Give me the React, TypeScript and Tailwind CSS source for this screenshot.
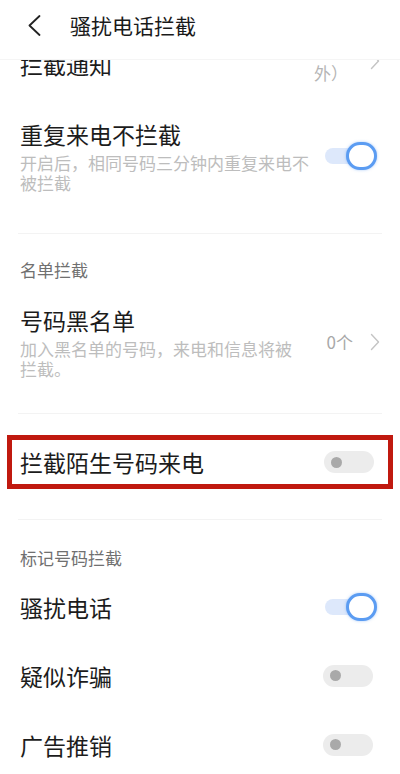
import React from 'react';

const font = { fontFamily: '"Noto Sans CJK SC", "Noto Sans", sans-serif' };

function Chevron({ className = '' }: { className?: string }) {
  return (
    <svg className={className} width="10" height="18" viewBox="0 0 10 18" fill="none">
      <path d="M1.5 1.5L8.5 9L1.5 16.5" stroke="#c4c4c4" strokeWidth="1.4" strokeLinecap="round" strokeLinejoin="round" />
    </svg>
  );
}

function Toggle({ on }: { on: boolean }) {
  if (on) {
    return (
      <div className="relative w-[54px] h-[30px] shrink-0">
        <div className="absolute left-[2px] top-[7px] w-[38px] h-[16px] rounded-full bg-[#dde8fb]" />
        <div className="absolute right-0 top-[1px] w-[31px] h-[28px] rounded-full bg-white border-[3px] border-[#5b9cf2] shadow-[0_0_3px_rgba(91,156,242,0.5)]" />
      </div>
    );
  }
  return (
    <div className="relative w-[54px] h-[30px] shrink-0">
      <div className="absolute left-0 top-[4px] w-[50px] h-[22px] rounded-full bg-[#ececec]" />
      <div className="absolute left-[7px] top-[9.5px] w-[11px] h-[11px] rounded-full bg-[#a9a9a9]" />
    </div>
  );
}

function Divider() {
  return <div className="mx-[18px] h-px bg-[#f3f3f3]" />;
}

function SimpleRow({ title, on }: { title: string; on: boolean }) {
  return (
    <div className="h-[69px] flex items-center justify-between pl-[20px] pr-[23px]">
      <span className="text-[23px] leading-[30px] text-[#1c1c1c]">{title}</span>
      <Toggle on={on} />
    </div>
  );
}

export default function App() {
  return (
    <div className="w-[400px] h-[774px] overflow-hidden bg-white" style={font}>
      {/* header */}
      <div className="h-[60px] flex items-start pt-[10px] border-b border-[#f5f5f5]">
        <svg className="ml-[28px] mt-[5px]" width="13" height="21" viewBox="0 0 13 21" fill="none">
          <path d="M11.5 1L1.5 10.5L11.5 20" stroke="#222" strokeWidth="1.8" strokeLinecap="round" strokeLinejoin="round" />
        </svg>
        <span className="ml-[29px] text-[21px] leading-[30px] text-[#1a1a1a]">骚扰电话拦截</span>
      </div>

      {/* scrolled-off row */}
      <div className="h-[52px] overflow-hidden">
        <div className="flex justify-between pl-[20px] pr-[20px] -mt-[9px]">
          <span className="text-[23px] leading-[26px] text-[#1c1c1c]">拦截通知</span>
          <div className="flex items-start gap-[22px]">
            <span className="mt-[11px] text-[17px] leading-[22px] text-[#b5b5b5]">外）</span>
            <Chevron className="mt-[1px]" />
          </div>
        </div>
      </div>

      {/* repeat calls */}
      <div className="flex items-center justify-between pl-[20px] pr-[23px] pt-[7px] pb-[40px] gap-[10px]">
        <div className="w-[296px]">
          <div className="text-[23px] leading-[30px] text-[#1c1c1c]">重复来电不拦截</div>
          <div className="mt-[4px] text-[17px] leading-[20px] text-[#bdbdbd]">
            开启后，相同号码三分钟内重复来电不被拦截
          </div>
        </div>
        <Toggle on />
      </div>
      <Divider />

      {/* list section */}
      <div className="mt-[25px] px-[20px] text-[17px] leading-[22px] text-[#707070]">名单拦截</div>
      <div className="mt-[24px] flex items-center justify-between pl-[20px] pr-[20px] pb-[34px]">
        <div className="w-[282px]">
          <div className="text-[23px] leading-[30px] text-[#1c1c1c]">号码黑名单</div>
          <div className="mt-[4px] text-[17px] leading-[20px] text-[#bdbdbd]">
            加入黑名单的号码，来电和信息将被拦截。
          </div>
        </div>
        <div className="flex items-center gap-[17px]">
          <span className="text-[17px] leading-[22px] text-[#a8a8a8]">0个</span>
          <Chevron />
        </div>
      </div>
      <Divider />

      {/* highlighted row */}
      <div className="mt-[21px] mx-[7px] h-[54px] border-[5px] border-[#c0190f] flex items-center justify-between pl-[8px] pr-[10px]">
        <span className="text-[23px] leading-[30px] text-[#1c1c1c]">拦截陌生号码来电</span>
        <Toggle on={false} />
      </div>

      <div className="mt-[30px]">
        <Divider />
      </div>

      {/* marked numbers */}
      <div className="mt-[27px] px-[20px] text-[17px] leading-[22px] text-[#707070]">标记号码拦截</div>
      <div className="mt-[3px]">
        <SimpleRow title="骚扰电话" on />
        <SimpleRow title="疑似诈骗" on={false} />
        <SimpleRow title="广告推销" on={false} />
      </div>
    </div>
  );
}
